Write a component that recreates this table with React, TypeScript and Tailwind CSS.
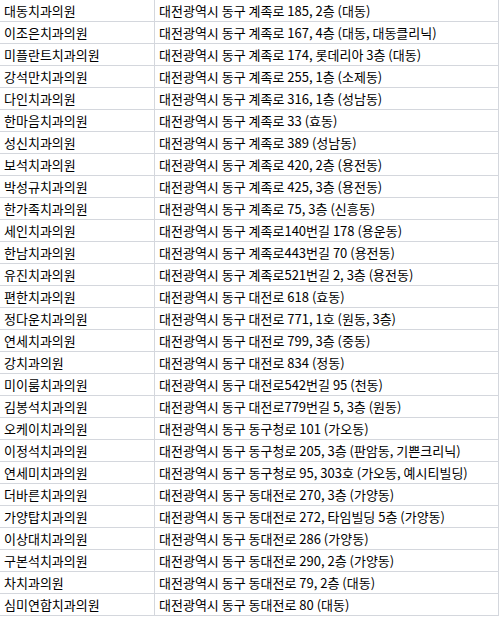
const rows: [string, string][] = [
  ['대동치과의원', '대전광역시 동구 계족로 185, 2층 (대동)'],
  ['이조은치과의원', '대전광역시 동구 계족로 167, 4층 (대동, 대동클리닉)'],
  ['미플란트치과의원', '대전광역시 동구 계족로 174, 롯데리아 3층 (대동)'],
  ['강석만치과의원', '대전광역시 동구 계족로 255, 1층 (소제동)'],
  ['다인치과의원', '대전광역시 동구 계족로 316, 1층 (성남동)'],
  ['한마음치과의원', '대전광역시 동구 계족로 33 (효동)'],
  ['성신치과의원', '대전광역시 동구 계족로 389 (성남동)'],
  ['보석치과의원', '대전광역시 동구 계족로 420, 2층 (용전동)'],
  ['박성규치과의원', '대전광역시 동구 계족로 425, 3층 (용전동)'],
  ['한가족치과의원', '대전광역시 동구 계족로 75, 3층 (신흥동)'],
  ['세인치과의원', '대전광역시 동구 계족로140번길 178 (용운동)'],
  ['한남치과의원', '대전광역시 동구 계족로443번길 70 (용전동)'],
  ['유진치과의원', '대전광역시 동구 계족로521번길 2, 3층 (용전동)'],
  ['편한치과의원', '대전광역시 동구 대전로 618 (효동)'],
  ['정다운치과의원', '대전광역시 동구 대전로 771, 1호 (원동, 3층)'],
  ['연세치과의원', '대전광역시 동구 대전로 799, 3층 (중동)'],
  ['강치과의원', '대전광역시 동구 대전로 834 (정동)'],
  ['미이룸치과의원', '대전광역시 동구 대전로542번길 95 (천동)'],
  ['김봉석치과의원', '대전광역시 동구 대전로779번길 5, 3층 (원동)'],
  ['오케이치과의원', '대전광역시 동구 동구청로 101 (가오동)'],
  ['이정석치과의원', '대전광역시 동구 동구청로 205, 3층 (판암동, 기쁜크리닉)'],
  ['연세미치과의원', '대전광역시 동구 동구청로 95, 303호 (가오동, 예시티빌딩)'],
  ['더바른치과의원', '대전광역시 동구 동대전로 270, 3층 (가양동)'],
  ['가양탑치과의원', '대전광역시 동구 동대전로 272, 타임빌딩 5층 (가양동)'],
  ['이상대치과의원', '대전광역시 동구 동대전로 286 (가양동)'],
  ['구본석치과의원', '대전광역시 동구 동대전로 290, 2층 (가양동)'],
  ['차치과의원', '대전광역시 동구 동대전로 79, 2층 (대동)'],
  ['심미연합치과의원', '대전광역시 동구 동대전로 80 (대동)'],
];

export default function App() {
  return (
    <div className="w-[499px] h-[617px] bg-white overflow-hidden font-['Noto_Sans_CJK_KR',sans-serif] text-[13px] text-black">
      <div className="grid grid-cols-[155px_344px]">
        {rows.map(([name, addr]) => (
          <div key={name} className="contents">
            <div className="h-[22px] border-b border-r border-[#d4d7dd] pl-[4px] flex items-center whitespace-nowrap overflow-hidden leading-none">
              {name}
            </div>
            <div className="h-[22px] border-b border-r border-[#d4d7dd] pl-[4px] flex items-center whitespace-nowrap overflow-hidden leading-none">
              {addr}
            </div>
          </div>
        ))}
      </div>
    </div>
  );
}
